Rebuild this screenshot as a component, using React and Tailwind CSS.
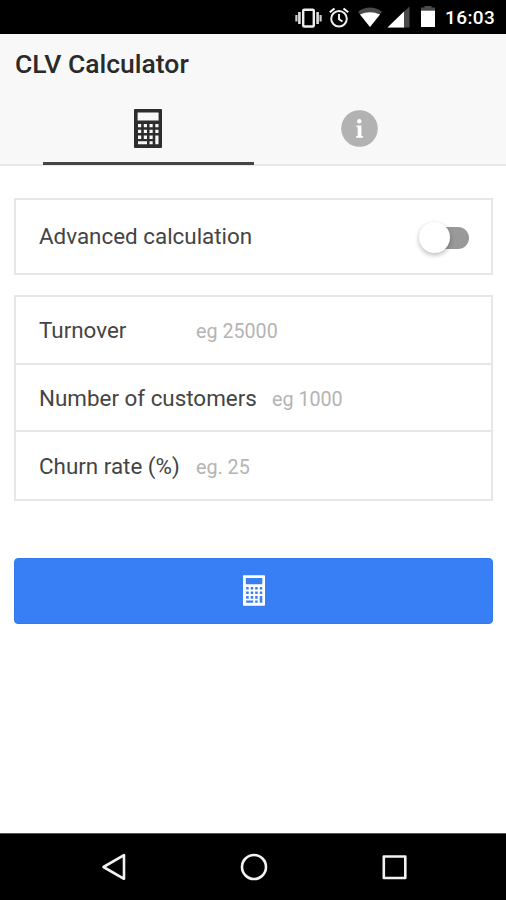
import React, { useState } from "react";

const fields = [
  { name: "turnover", label: "Turnover", placeholder: "eg 25000", labelWidth: "w-[157px]" },
  { name: "customers", label: "Number of customers", placeholder: "eg 1000", labelWidth: "w-[233px]" },
  { name: "churn", label: "Churn rate (%)", placeholder: "eg. 25", labelWidth: "w-[157px]" },
];

const CalculatorIcon = ({ className }) => (
  <svg viewBox="0 0 28 39" className={className} fill="currentColor" fillRule="evenodd">
    <path d="M1 0H27Q28 0 28 1V38Q28 39 27 39H1Q0 39 0 38V1Q0 0 1 0Z M3.6 3.6V11.6H24.6V3.6Z M4 15V18.3H7.2V15Z M9.8 15V18.3H13V15Z M15.5 15V18.3H18.7V15Z M21.3 15V18.3H24.5V15Z M4 20.8V24.1H7.2V20.8Z M9.8 20.8V24.1H13V20.8Z M15.5 20.8V24.1H18.7V20.8Z M21.3 20.8V24.1H24.5V20.8Z M4 26.6V29.9H7.2V26.6Z M9.8 26.6V29.9H13V26.6Z M15.5 26.6V29.9H18.7V26.6Z M4 32.2V35.2H13V32.2Z M15.5 32.2V35.2H18.7V32.2Z M21.3 26.6V35.2H24.5V26.6Z" />
  </svg>
);

const StatusBar = () => (
  <div className="h-[34px] bg-black text-white flex items-center justify-end pr-[11px]">
    <svg width="150" height="34" viewBox="0 0 150 34" fill="none" stroke="#fff">
      {/* vibrate */}
      <rect x="13.2" y="9.7" width="10.6" height="16.8" rx="1" strokeWidth="2.4" stroke="#eee" />
      <path d="M9.4 12V24M27.6 12V24" strokeWidth="2.6" stroke="#ddd" />
      <path d="M6.4 15V21.5M30.6 15V21.5" strokeWidth="2.2" stroke="#ccc" />
      {/* alarm */}
      <circle cx="49" cy="18.8" r="7.8" strokeWidth="2" stroke="#eee" />
      <path d="M49 14V19.3L52.5 21.5" strokeWidth="1.8" />
      <path d="M39.8 12.3L44.5 8.4M53.5 8.4L58.2 12.3" strokeWidth="2" />
      {/* wifi */}
      <path d="M68 11.7Q80 3.5 92 11.7L80 27Z" fill="#4a4a4a" stroke="none" />
      <path d="M70 14.5Q80 10 90 14.5L80 27Z" fill="#fff" stroke="none" />
      {/* mobile signal */}
      <path d="M97.5 27.5L119.5 6.5V27.5Z" fill="#4a4a4a" stroke="none" />
      <path d="M97.5 27.5L114 11.5V27.5Z" fill="#fff" stroke="none" />
      {/* battery */}
      <path d="M131 10V7.5H134.5V6H141.5V7.5H145V10Z" fill="#4a4a4a" stroke="none" />
      <path d="M131 10.5H145V27H131Z" fill="#fff" stroke="none" />
    </svg>
    <span className="ml-[5px] w-[50px] text-[19px] leading-[34px] pt-[2px] font-medium whitespace-nowrap tracking-[0.4px]">16:03</span>
  </div>
);

const NavBar = () => (
  <div className="h-[67px] bg-black border-t border-[#555] flex items-center justify-center gap-[112px] pl-[2px]">
    <button aria-label="Back">
      <svg width="28" height="28" viewBox="0 0 28 28" fill="none" stroke="#f2f2f2" strokeWidth="2.6" strokeLinejoin="round">
        <path d="M24 2.2V25.8L3.5 14Z" />
      </svg>
    </button>
    <button aria-label="Home">
      <svg width="28" height="28" viewBox="0 0 28 28" fill="none" stroke="#f2f2f2" strokeWidth="2.6">
        <circle cx="14" cy="14" r="12" />
      </svg>
    </button>
    <button aria-label="Recent apps">
      <svg width="28" height="28" viewBox="0 0 28 28" fill="none" stroke="#f2f2f2" strokeWidth="2.6" strokeLinejoin="round">
        <rect x="3.8" y="3.5" width="21.5" height="21.5" />
      </svg>
    </button>
  </div>
);

const App = () => {
  const [tab, setTab] = useState("calculator");
  const [advanced, setAdvanced] = useState(false);
  const [values, setValues] = useState({ turnover: "", customers: "", churn: "" });

  return (
    <div className="w-[506px] h-[900px] bg-white flex flex-col font-['Roboto',sans-serif] overflow-hidden">
      <StatusBar />

      <header className="h-[132px] bg-[#f8f8f8] border-b-2 border-[#e8e8e8] flex flex-col shrink-0">
        <h1 className="h-[60px] pl-[15px] text-[26.5px] leading-[60px] font-medium text-[#2a2a2a]">CLV Calculator</h1>
        <div className="flex h-[71px] pl-[43px] shrink-0">
          <button
            onClick={() => setTab("calculator")}
            className={`w-[211px] flex justify-center pr-[1px] pt-[15px] border-b-[3px] ${tab === "calculator" ? "border-[#444] text-[#2d2d2d]" : "border-transparent text-[#b2b2b2]"}`}
          >
            <CalculatorIcon className="w-[28px] h-[39px]" />
          </button>
          <button
            onClick={() => setTab("info")}
            className={`w-[211px] flex justify-center pr-[1px] pt-[16px] border-b-[3px] ${tab === "info" ? "border-[#444] text-[#2d2d2d]" : "border-transparent text-[#b2b2b2]"}`}
          >
            <svg width="37" height="37" viewBox="0 0 37 37">
              <circle cx="18.5" cy="18.5" r="18.3" fill="currentColor" />
              <circle cx="18.3" cy="11.3" r="2.2" fill="#fff" />
              <path d="M15.5 15.5H20.4V26H21.9V27.8H15.2V26H16.7V17.2H15.5Z" fill="#fff" />
            </svg>
          </button>
        </div>
      </header>

      <main className="flex-1 pl-[14px] pr-[13px] pt-[32px]">
        <div className="h-[77px] border-2 border-[#e6e6e6] flex items-center justify-between pl-[23px] pr-[22px]">
          <span className="pb-[2px] text-[22.4px] leading-[30px] text-[#444]">Advanced calculation</span>
          <button
            role="switch"
            aria-checked={advanced}
            aria-label="Advanced calculation"
            onClick={() => setAdvanced(!advanced)}
            className={`w-[50px] h-[32px] mt-[2px] flex items-center ${advanced ? "flex-row-reverse" : ""}`}
          >
            <span className="w-[31px] h-[31px] rounded-full bg-white shadow-[0_2px_5px_rgba(0,0,0,0.28)] z-10 shrink-0" />
            <span className="w-[36px] h-[22px] -ml-[17px] rounded-full bg-[#999] shrink-0" />
          </button>
        </div>

        <form className="mt-[20px] border-2 border-[#e6e6e6] divide-y-2 divide-[#e6e6e6]">
          {fields.map((field) => (
            <label key={field.name} className="h-[67px] first:h-[68px] flex items-center pl-[23px]">
              <span className={`${field.labelWidth} shrink-0 text-[22.4px] leading-[30px] text-[#444] whitespace-nowrap`}>{field.label}</span>
              <input
                value={values[field.name]}
                onChange={(e) => setValues({ ...values, [field.name]: e.target.value })}
                placeholder={field.placeholder}
                className="w-[200px] pt-[4px] text-[19.7px] leading-[30px] text-[#444] placeholder:text-[#b4b4b4] outline-none"
              />
            </label>
          ))}
        </form>

        <button
          aria-label="Calculate"
          className="mt-[57px] w-full h-[66px] rounded-[4px] bg-[#387ef5] border border-[#3079ee] text-white flex items-center justify-center pb-[1px]"
        >
          <CalculatorIcon className="w-[22px] h-[31px]" />
        </button>
      </main>

      <NavBar />
    </div>
  );
};

export default App;
